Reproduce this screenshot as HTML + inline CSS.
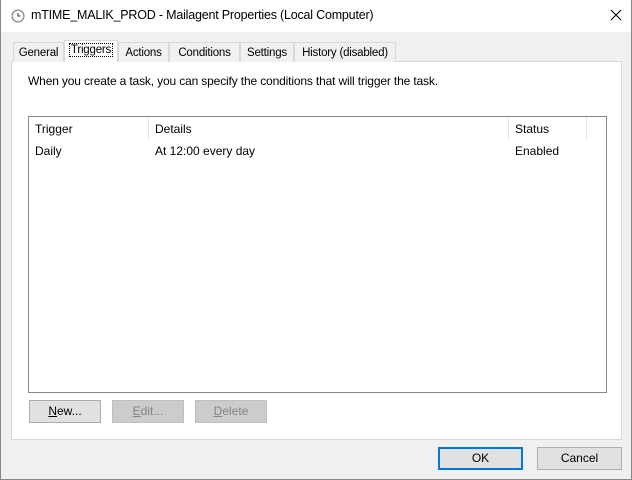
<!DOCTYPE html>
<html><head><style>
*{margin:0;padding:0;box-sizing:border-box}
body{width:632px;height:480px;background:#f0f0f0;font-family:"Liberation Sans",sans-serif;font-size:12px;color:#000;position:relative;overflow:hidden}
.a{position:absolute;white-space:nowrap}
.win{position:absolute;left:0;top:0;width:632px;height:480px;border:1px solid #888;border-top:none}
.title{position:absolute;left:1px;top:0;width:630px;height:32px;background:#fff}
.tab{position:absolute;top:42px;height:20px;border:1px solid #d9d9d9;border-bottom:none;background:#f0f0f0;padding:4px 0 0;font-size:11.5px;text-align:center;white-space:nowrap;letter-spacing:-0.2px}
.panel{position:absolute;left:11px;top:61px;width:611px;height:379px;background:#fff;border:1px solid #d9d9d9}
.list{position:absolute;left:28px;top:116px;width:579px;height:277px;border:1px solid #828790;background:#fff}
.sep{position:absolute;top:0;width:1px;height:23px;background:#e5e5e5}
.btn{position:absolute;height:23px;border:1px solid #adadad;background:#e1e1e1;text-align:center;line-height:21px}
.dis{background:#cccccc;border-color:#bfbfbf;color:#838383}
</style></head><body>
<div class="win"></div>
<div class="title"></div>
<svg class="a" style="left:11px;top:9px" width="14" height="14" viewBox="0 0 14 14"><circle cx="7" cy="7" r="6" fill="#e8e8e8" stroke="#6a7a8a"/><circle cx="7" cy="7" r="4.5" fill="#fff"/><path d="M7 4v3h2.5" stroke="#333" fill="none"/></svg>
<div class="a" style="left:31px;top:8px;font-size:12.5px;letter-spacing:-0.2px">mTIME_MALIK_PROD - Mailagent Properties (Local Computer)</div>
<svg class="a" style="left:610px;top:9px" width="12" height="12" viewBox="0 0 12 12"><path d="M1 1L11 11M11 1L1 11" stroke="#000" stroke-width="1"/></svg>
<div class="panel"></div>
<div class="tab" style="left:13px;width:51px">General</div>
<div class="tab" style="left:64px;top:40px;height:22px;width:54px;background:#fff;padding-top:3px"><span style="outline:1px dotted #000;padding:0 1px">Triggers</span></div>
<div class="tab" style="left:118px;width:51px">Actions</div>
<div class="tab" style="left:169px;width:71px">Conditions</div>
<div class="tab" style="left:240px;width:54px">Settings</div>
<div class="tab" style="left:294px;width:102px">History (disabled)</div>
<div class="a" style="left:28px;top:74px;letter-spacing:-0.15px">When you create a task, you can specify the conditions that will trigger the task.</div>
<div class="list">
<div class="sep" style="left:119px"></div><div class="sep" style="left:479px"></div><div class="sep" style="left:557px"></div>
<div class="a" style="left:6px;top:5px">Trigger</div>
<div class="a" style="left:126px;top:5px">Details</div>
<div class="a" style="left:486px;top:5px">Status</div>
<div class="a" style="left:6px;top:27px">Daily</div>
<div class="a" style="left:126px;top:27px">At 12:00 every day</div>
<div class="a" style="left:486px;top:27px">Enabled</div>
</div>
<div class="btn" style="left:29px;top:400px;width:72px"><u>N</u>ew...</div>
<div class="btn dis" style="left:112px;top:400px;width:72px"><u>E</u>dit...</div>
<div class="btn dis" style="left:195px;top:400px;width:72px"><u>D</u>elete</div>
<div class="btn" style="left:438px;top:447px;width:85px;border:2px solid #0078d7;line-height:19px">OK</div>
<div class="btn" style="left:537px;top:447px;width:85px">Cancel</div>
</body></html>
